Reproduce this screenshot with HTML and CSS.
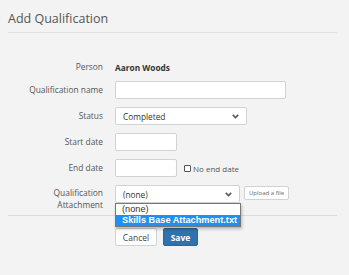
FILE: index.html
```html
<!DOCTYPE html>
<html lang="en">
<head>
    <meta charset="UTF-8">
    <meta name="viewport" content="width=device-width, initial-scale=1.0">
    <title>Add Qualification</title>
    <link rel="stylesheet" href="styles.css">
</head>
<body>

<h1 class="title">Add Qualification</h1>

<form class="form">
    <div class="row row-person">
        <div class="label">Person</div>
        <div class="value person">Aaron Woods</div>
    </div>

    <div class="row">
        <div class="label">Qualification name</div>
        <div class="value"><input type="text" class="input input-wide"></div>
    </div>

    <div class="row">
        <div class="label">Status</div>
        <div class="value">
            <div class="select select-status">
                <span>Completed</span>
                <svg width="7" height="5" viewBox="0 0 7 5"><path d="M0.8 0.9 L3.5 3.6 L6.2 0.9" fill="none" stroke="#555" stroke-width="1.5"/></svg>
            </div>
        </div>
    </div>

    <div class="row">
        <div class="label">Start date</div>
        <div class="value"><input type="text" class="input input-date"></div>
    </div>

    <div class="row">
        <div class="label">End date</div>
        <div class="value">
            <input type="text" class="input input-date">
            <label class="check"><span class="box"></span>No end date</label>
        </div>
    </div>

    <div class="row row-attach">
        <div class="label label-two">Qualification<br>Attachment</div>
        <div class="value value-top">
            <div class="select-wrap">
                <div class="select select-attach">
                    <span>(none)</span>
                    <svg width="7" height="5" viewBox="0 0 7 5"><path d="M0.8 0.9 L3.5 3.6 L6.2 0.9" fill="none" stroke="#555" stroke-width="1.5"/></svg>
                </div>
                <div class="dropdown">
                    <div class="option">(none)</div>
                    <div class="option selected">Skills Base Attachment.txt</div>
                </div>
            </div>
            <button type="button" class="upload">Upload a file</button>
        </div>
    </div>

    <div class="actions">
        <button type="button" class="btn btn-cancel">Cancel</button>
        <button type="button" class="btn btn-save">Save</button>
    </div>
</form>

</body>
</html>
```

FILE: styles.css
```css
body {
    margin: 0;
    padding: 0 12px 0 8px;
    background-color: #f3f3f3;
    font-family: "Open Sans", Arial, sans-serif;
    color: #555;
}

.title {
    margin: 0;
    padding-top: 10px;
    height: 22px;
    font-size: 12.5px;
    font-weight: normal;
    line-height: 18px;
    color: #555;
    border-bottom: 1px solid #e2e2e2;
}

.form {
    padding-top: 25px;
}

.row {
    display: flex;
    align-items: center;
    min-height: 18px;
    margin-bottom: 8px;
}

.row-person {
    margin-bottom: 5px;
}

.label {
    width: 95px;
    padding-right: 12px;
    text-align: right;
    font-size: 8.4px;
    line-height: 12px;
    color: #555;
    flex-shrink: 0;
}

.value {
    display: flex;
    align-items: center;
}

.value-top {
    align-items: flex-start;
}

.person {
    font-size: 8.3px;
    font-weight: bold;
    color: #333;
}

.input {
    box-sizing: border-box;
    height: 18px;
    margin: 0;
    border: 1px solid #d2d2d2;
    border-radius: 2px;
    background-color: #fff;
}

.input-wide {
    width: 171px;
}

.input-date {
    width: 62px;
}

.select {
    box-sizing: border-box;
    height: 18px;
    display: flex;
    align-items: center;
    justify-content: space-between;
    padding: 0 7px 0 7px;
    border: 1px solid #d2d2d2;
    border-radius: 2px;
    background-color: #fff;
    font-size: 8.3px;
    color: #333;
}

.select-status {
    width: 132px;
}

.select-attach {
    width: 125px;
}

.check {
    display: flex;
    align-items: center;
    margin-left: 7px;
    font-size: 8px;
    color: #555;
}

.box {
    box-sizing: border-box;
    width: 7px;
    height: 7px;
    margin-right: 2px;
    border: 1px solid #555;
    border-radius: 1px;
    background-color: #fff;
}

.row-attach {
    align-items: flex-start;
    margin-bottom: 4px;
}

.label-two {
    padding-top: 2px;
}

.select-wrap {
    position: relative;
}

.dropdown {
    position: absolute;
    top: 18px;
    left: 0;
    width: 126px;
    box-sizing: border-box;
    border: 1px solid #767676;
    background-color: #fff;
    box-shadow: 1px 2px 3px rgba(0, 0, 0, 0.25);
    z-index: 2;
}

.option {
    height: 11px;
    line-height: 11px;
    padding-left: 6px;
    font-family: "Liberation Sans", Arial, sans-serif;
    font-size: 9.2px;
    color: #333;
    white-space: nowrap;
    overflow: hidden;
}

.option.selected {
    background-color: #1e8ff5;
    color: #fff;
    font-weight: bold;
}

.upload {
    box-sizing: border-box;
    height: 14px;
    margin: 1px 0 0 4px;
    padding: 0 4px;
    border: 1px solid #d2d2d2;
    border-radius: 2px;
    background-color: #fff;
    font-family: "Open Sans", Arial, sans-serif;
    font-size: 6px;
    color: #666;
}

.actions {
    display: flex;
    gap: 6px;
    padding: 12px 0 0 107px;
    border-top: 1px solid #dcdcdc;
}

.btn {
    box-sizing: border-box;
    height: 18px;
    padding: 0;
    border-radius: 2px;
    font-family: "Open Sans", Arial, sans-serif;
    font-size: 8.5px;
    cursor: pointer;
}

.btn-cancel {
    width: 42px;
    border: 1px solid #d2d2d2;
    background-color: #fff;
    color: #444;
}

.btn-save {
    width: 35px;
    border: 1px solid #2a659b;
    background-color: #3072ad;
    color: #fff;
    font-weight: bold;
}
```
